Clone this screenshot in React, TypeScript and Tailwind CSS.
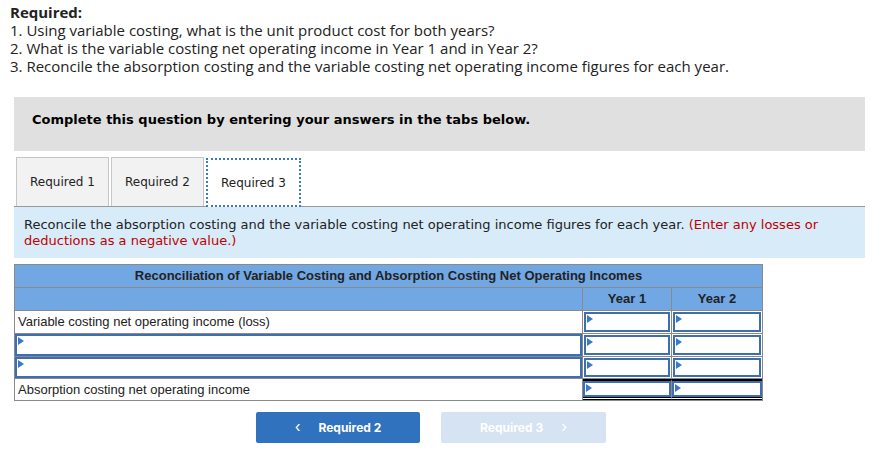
import React from "react";

const Tri = () => (
  <span className="absolute left-[1px] top-[1px] w-0 h-0 border-t-[4px] border-b-[4px] border-l-[6px] border-t-transparent border-b-transparent border-l-[#3a78c8]" />
);

const InputCell = () => (
  <div className="relative h-full border-2 border-[#3d6fb0] bg-white">
    <Tri />
  </div>
);

export default function App() {
  return (
    <div className="w-[890px] h-[455px] bg-white relative overflow-hidden">
      <div className="pl-[10px] pt-[3px] text-[15px] leading-[18px] text-[#222] font-['Open_Sans',sans-serif]">
        <div className="font-bold">Required:</div>
        <div>1. Using variable costing, what is the unit product cost for both years?</div>
        <div>2. What is the variable costing net operating income in Year 1 and in Year 2?</div>
        <div>3. Reconcile the absorption costing and the variable costing net operating income figures for each year.</div>
      </div>

      <div className="ml-[14px] w-[851px] mt-[22px] h-[54px] bg-[#e0e0e0] flex items-center pl-[18px] pb-[8px] font-['DejaVu_Sans',sans-serif] text-[13px] font-bold text-black">
        Complete this question by entering your answers in the tabs below.
      </div>

      <div className="ml-[14px] w-[851px] mt-[6px] font-['DejaVu_Sans',sans-serif] text-[12px] text-[#222]">
        <div className="flex items-end h-[49px] pl-[2px] gap-[2px]">
          <div className="w-[93px] h-[49px] bg-[#f2f2f2] border border-[#c6c6c6] border-b-0 flex items-center justify-center">Required 1</div>
          <div className="w-[93px] h-[49px] bg-[#f2f2f2] border border-[#c6c6c6] border-b-0 flex items-center justify-center">Required 2</div>
          <div className="w-[95px] h-[49px] bg-white border-2 border-dotted border-[#3a78c8] flex items-center justify-center -mb-[1px] relative z-10">Required 3</div>
        </div>
        <div className="border-t border-[#999] bg-[#d8ebf9] h-[52px] pl-[10px] pr-[20px] pt-[10px] text-[13px] leading-[16px]">
          Reconcile the absorption costing and the variable costing net operating income figures for each year.{" "}
          <span className="text-[#c00000]">(Enter any losses or deductions as a negative value.)</span>
        </div>
      </div>

      <div className="ml-[14px] mt-[6px] w-[749px] border border-[#8a8a8a] font-['Liberation_Sans',sans-serif] text-[13px] text-[#222]">
        <div className="h-[23px] bg-[#71a7e3] border-b border-[#8a8a8a] flex items-center justify-center font-bold text-[13px]">
          Reconciliation of Variable Costing and Absorption Costing Net Operating Incomes
        </div>
        <div className="grid grid-cols-[568px_89px_1fr] h-[23px] bg-[#71a7e3] border-b border-[#8a8a8a] font-bold text-[13px]">
          <div className="border-r border-[#8a8a8a]" />
          <div className="border-r border-[#8a8a8a] flex items-center justify-center">Year 1</div>
          <div className="flex items-center justify-center">Year 2</div>
        </div>
        <div className="grid grid-cols-[568px_89px_1fr] h-[23px] border-b border-[#8a8a8a]">
          <div className="border-r border-[#8a8a8a] flex items-center pl-[3px]">Variable costing net operating income (loss)</div>
          <div className="border-r border-[#8a8a8a] p-[1px]"><InputCell /></div>
          <div className="p-[1px]"><InputCell /></div>
        </div>
        <div className="grid grid-cols-[568px_89px_1fr] h-[23px] border-b border-[#8a8a8a]">
          <div className="border-r border-[#8a8a8a]"><InputCell /></div>
          <div className="border-r border-[#8a8a8a] p-[1px]"><InputCell /></div>
          <div className="p-[1px]"><InputCell /></div>
        </div>
        <div className="grid grid-cols-[568px_89px_1fr] h-[22px] border-b border-[#8a8a8a]">
          <div className="border-r border-[#8a8a8a]"><InputCell /></div>
          <div className="border-r border-[#8a8a8a] p-[1px]"><InputCell /></div>
          <div className="p-[1px]"><InputCell /></div>
        </div>
        <div className="grid grid-cols-[568px_89px_1fr] h-[21px]">
          <div className="border-r border-[#8a8a8a] flex items-center pl-[3px]">Absorption costing net operating income</div>
          <div className="border-r border-[#8a8a8a] border-t-2 border-t-black border-b-[3px] border-b-black border-double"><InputCell /></div>
          <div className="border-t-2 border-t-black border-b-[3px] border-b-black border-double"><InputCell /></div>
        </div>
      </div>

      <div className="flex ml-[256px] mt-[11px] gap-[21px] font-['Inter',sans-serif] text-[12px] font-bold text-white">
        <div className="w-[164px] h-[31px] rounded-[2px] bg-[#3172be] flex items-center justify-center gap-[18px]">
          <span className="text-[15px] font-normal">&lsaquo;</span>
          <span>Required 2</span>
        </div>
        <div className="w-[165px] h-[31px] rounded-[2px] bg-[#d6e3f3] flex items-center justify-center gap-[18px]">
          <span>Required 3</span>
          <span className="text-[15px] font-normal">&rsaquo;</span>
        </div>
      </div>
    </div>
  );
}
